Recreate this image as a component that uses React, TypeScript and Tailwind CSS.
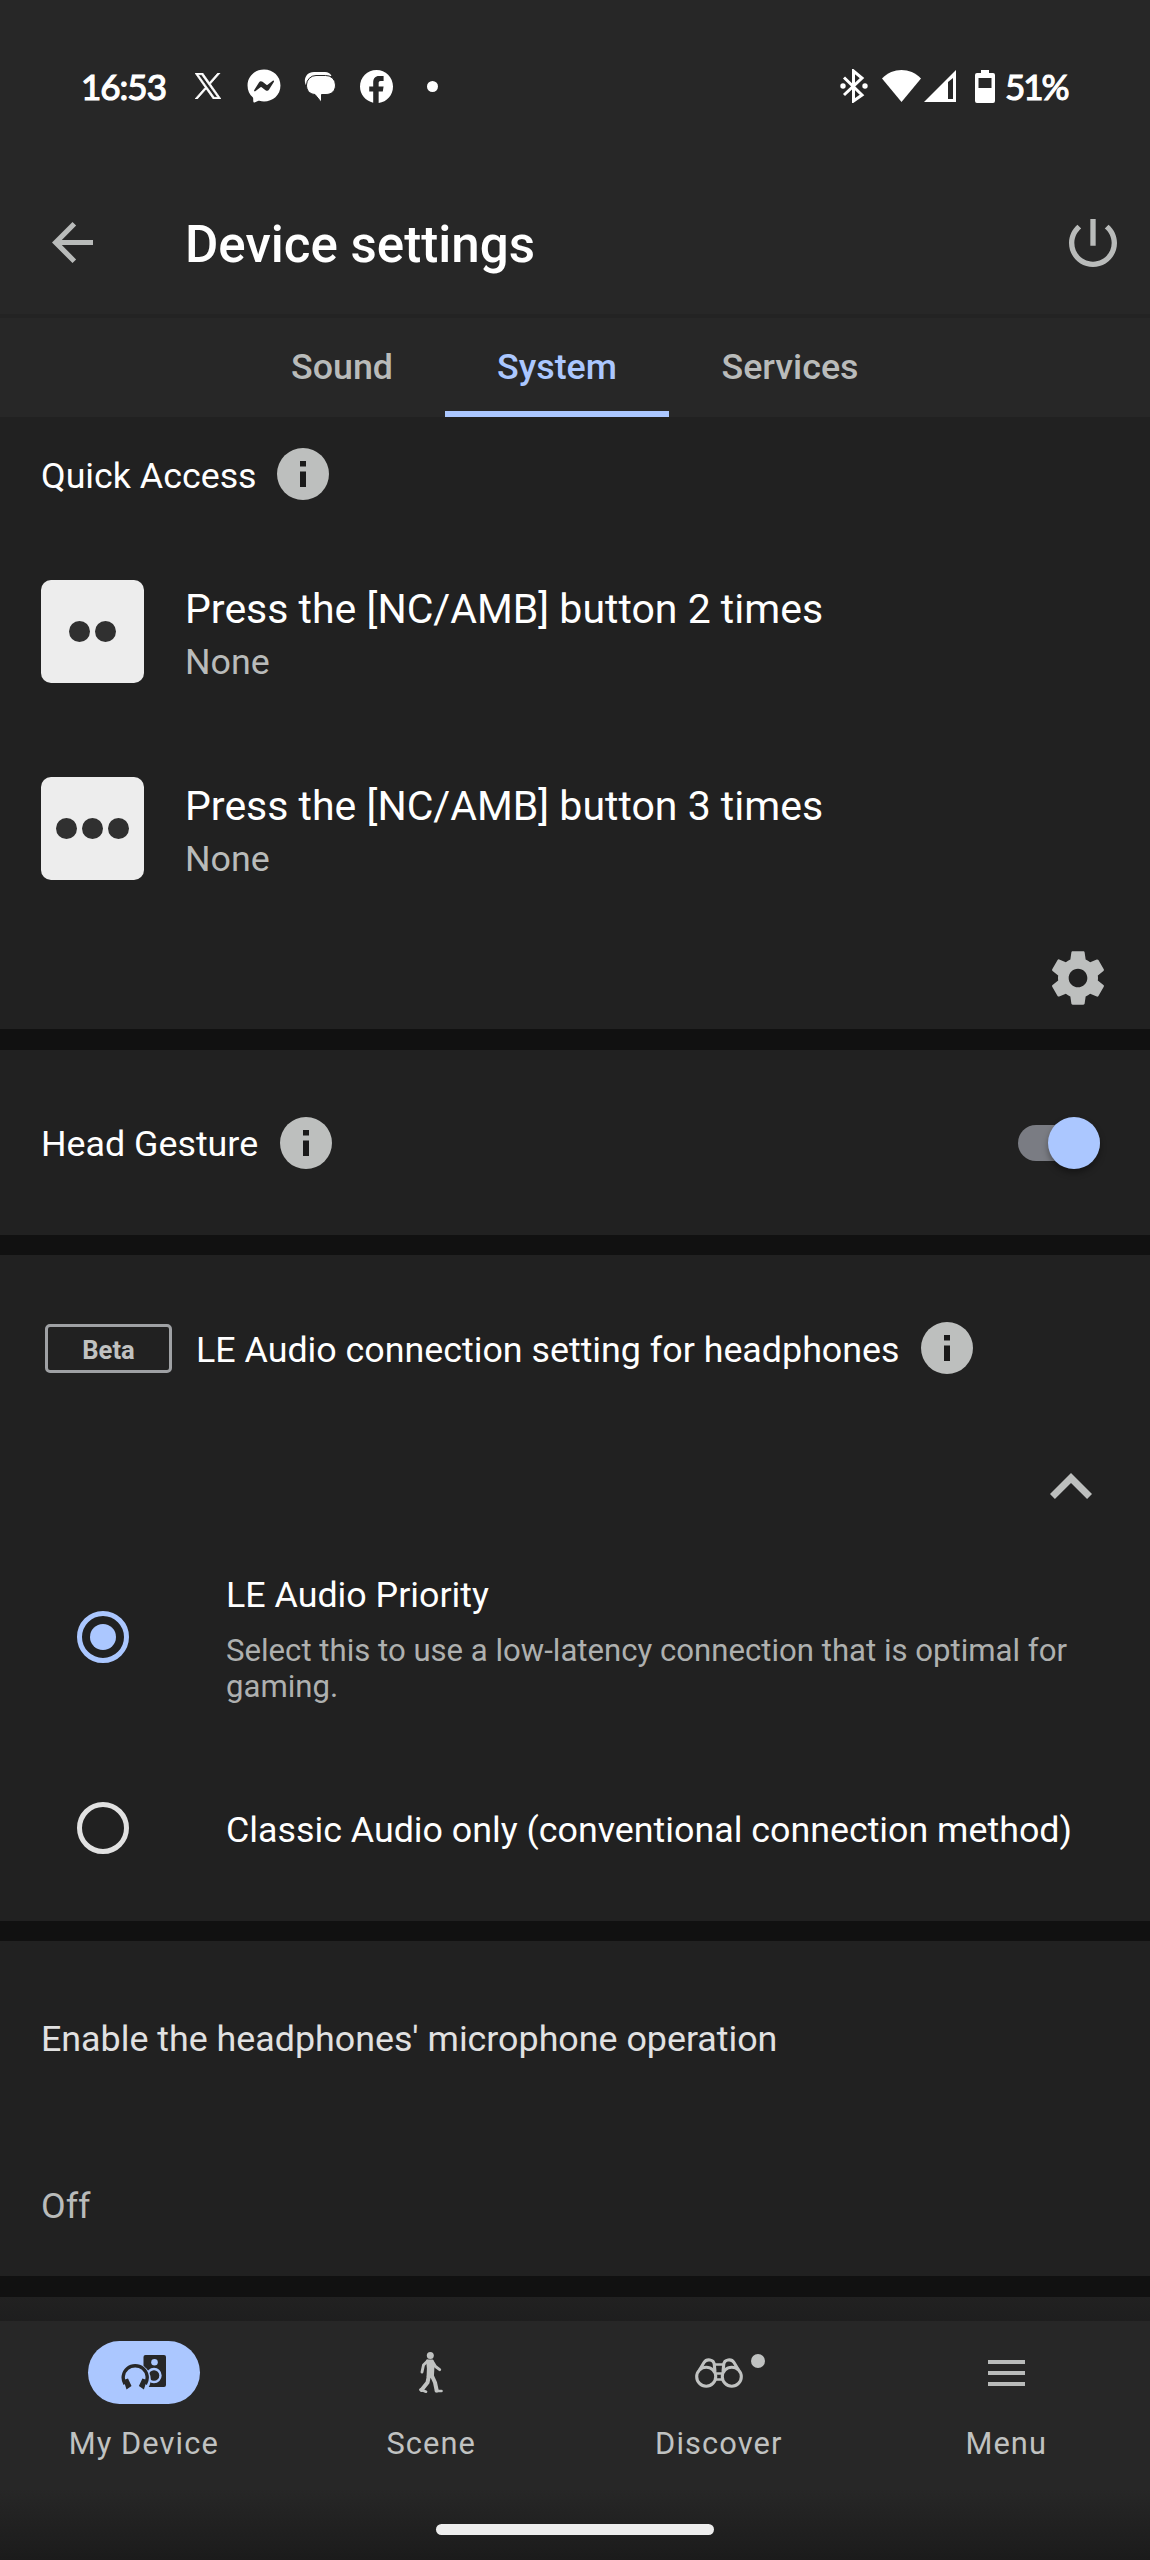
import type { ReactNode } from "react";
import { FaFacebookMessenger } from "react-icons/fa6";

function InfoIcon() {
  return (
    <svg className="h-[52px] w-[52px] shrink-0" viewBox="0 0 52 52">
      <circle cx="26" cy="26" r="26" fill="#bdbfbe" />
      <path d="M23 13h6v5.500h-6zM23 23.500h6V39h-6z" fill="#1a1a1a" />
    </svg>
  );
}

function StatusBar() {
  return (
    <div className="flex h-[172px] items-center pl-[81px] pr-[81px] text-white">
      <span className="w-[84px] whitespace-nowrap font-['Lato'] text-[35px] leading-[40px] tracking-[-1px] [-webkit-text-stroke:1.200px_white]">
        16:53
      </span>

      <svg className="ml-[30px] h-[26px] w-[26px]" viewBox="0 0 24 24" fill="currentColor" stroke="currentColor" strokeWidth="0.700">
        <path d="M14.258 10.152L23.176 0h-2.113l-7.747 8.813L7.133 0H0l9.352 13.328L0 23.973h2.113l8.176-9.309 6.531 9.309h7.133zm-2.895 3.293l-.949-1.328L2.875 1.560h3.246l6.086 8.523.945 1.328 7.910 11.078h-3.246zm0 0" />
      </svg>

      <FaFacebookMessenger className="ml-[26px] h-[34px] w-[34px]" />

      <svg className="ml-[23px] mt-[3px] h-[31px] w-[33px]" viewBox="0 0 33 31" fill="currentColor">
        <path d="M10 0h11c3 0 5 1 6.500 4H12C6 4 3 7 2.500 14C-1.500 8 2 0 10 0z" />
        <path d="M12 3.500h9.500a9.500 9.500 0 0 1 10 9.500c0 6-4 9.500-9.500 9.500h-4.500V30.500L11 22.500C5 22 2.500 18 2.500 13A9.500 9.500 0 0 1 12 3.500z" stroke="#272727" strokeWidth="1" />
      </svg>

      <svg className="ml-[23px] h-[33px] w-[33px]" viewBox="2 2 20 20" fill="currentColor">
        <path d="M22 12c0-5.520-4.480-10-10-10S2 6.480 2 12c0 4.840 3.440 8.870 8 9.800V15H7.600v-3H10V9.500C10 7.200 11.300 5.700 13.500 5.700h2.800v3h-1.800c-.9 0-1.200.45-1.200 1.200V12h3l-.5 3h-2.500v6.950c5.050-.5 8.700-4.760 8.700-9.950z" />
      </svg>

      <span className="ml-[34px] h-[11px] w-[11px] rounded-full bg-white" />

      <svg className="ml-auto h-[34px] w-[28px]" viewBox="0 0 28 34" fill="none" stroke="currentColor" strokeWidth="3">
        <path d="M4 8.500L22 26l-8.500 6V2L22 9 4 26" />
        <circle cx="3" cy="17" r="2.700" fill="currentColor" stroke="none" />
        <circle cx="25" cy="17" r="2.700" fill="currentColor" stroke="none" />
      </svg>

      <svg className="ml-[14px] h-[32px] w-[39px]" viewBox="0 0 39 32" fill="currentColor">
        <path d="M0 8.500C11 -2.800 28 -2.800 39 8.500L19.500 32z" />
      </svg>

      <svg className="ml-[3px] h-[32px] w-[32px]" viewBox="0 0 32 32" fill="currentColor">
        <path fillRule="evenodd" d="M0 32L32 0v32zM24 12v17h5V8z" />
      </svg>

      <svg className="ml-[19px] h-[33px] w-[20px]" viewBox="0 0 20 33" fill="currentColor">
        <path fillRule="evenodd" d="M6 0h8v3h4a2 2 0 0 1 2 2v26a2 2 0 0 1-2 2H2a2 2 0 0 1-2-2V5a2 2 0 0 1 2-2h4zM3.500 8v10h13V8z" />
      </svg>

      <span className="ml-[10px] w-[64px] whitespace-nowrap font-['Lato'] text-[35px] leading-[40px] tracking-[-2px] [-webkit-text-stroke:1.200px_white]">
        51%
      </span>
    </div>
  );
}

function Header() {
  return (
    <header className="flex h-[142px] items-center pb-[1px] pl-[52px] pr-[33px]">
      <svg className="h-[41px] w-[41px]" viewBox="4 4 16 16" fill="#b9bbba">
        <path d="M20 11H7.830l5.590-5.590L12 4l-8 8 8 8 1.410-1.410L7.830 13H20v-2z" />
      </svg>
      <h1 className="ml-[92px] mt-[4px] text-[51.100px] font-medium leading-[60px] text-white">
        Device settings
      </h1>
      <svg className="ml-auto h-[48px] w-[48px]" viewBox="3 3 18 18" fill="#b9bbba">
        <path d="M13 3h-2v10h2V3zm4.830 2.170l-1.420 1.420C17.990 7.860 19 9.810 19 12c0 3.870-3.130 7-7 7s-7-3.130-7-7c0-2.190 1.010-4.140 2.580-5.420L6.170 5.170C4.230 6.820 3 9.260 3 12c0 4.970 4.030 9 9 9s9-4.030 9-9c0-2.740-1.230-5.180-3.170-6.830z" />
      </svg>
    </header>
  );
}

function Tabs() {
  return (
    <nav className="flex h-[103px] justify-center border-t-4 border-[#232323] text-[35.800px] font-medium leading-[42px] text-[#b9bbba]">
      <div className="w-[206px] pt-[28px] text-center">Sound</div>
      <div className="w-[224px] border-b-[6px] border-[#abc7ff] pt-[28px] text-center text-[#abc7ff]">
        System
      </div>
      <div className="w-[242px] pt-[28px] text-center">Services</div>
    </nav>
  );
}

function QuickAccessRow({ presses }: { presses: number }) {
  return (
    <div className="flex h-[103px]">
      <div className="flex w-[103px] items-center justify-center gap-[5px] rounded-[10px] bg-[#ededed]">
        {Array.from({ length: presses }, (_, i) => (
          <span key={i} className="h-[21px] w-[21px] rounded-full bg-[#303030]" />
        ))}
      </div>
      <div className="ml-[41px] pt-[5px]">
        <p className="text-[41px] leading-[48px] text-white">
          Press the [NC/AMB] button {presses} times
        </p>
        <p className="mt-[8px] text-[35.800px] leading-[42px] text-[#b9bbba]">None</p>
      </div>
    </div>
  );
}

function Radio({ checked }: { checked?: boolean }) {
  if (checked) {
    return (
      <span className="flex h-[52px] w-[52px] shrink-0 items-center justify-center rounded-full border-[5px] border-[#abc7ff]">
        <span className="h-[26px] w-[26px] rounded-full bg-[#abc7ff]" />
      </span>
    );
  }
  return <span className="h-[52px] w-[52px] shrink-0 rounded-full border-[5px] border-[#e1e1e1]" />;
}

function NavItem({ label, children }: { label: string; children: ReactNode }) {
  return (
    <div className="flex flex-1 flex-col items-center pt-[20px]">
      {children}
      <span className="mt-[21px] text-[30.800px] leading-[38px] tracking-[1.100px] text-[#c0c2c1]">
        {label}
      </span>
    </div>
  );
}

function BottomNav() {
  return (
    <nav className="flex h-[167px] bg-[#272727]">
      <NavItem label="My Device">
        <div className="flex h-[63px] w-[112px] items-center justify-center rounded-full bg-[#abc7ff]">
          <svg className="h-[35px] w-[45px]" viewBox="0 0 45 35" fill="none">
            <rect x="22.500" width="22.500" height="32" rx="2" fill="#272727" />
            <circle cx="33.500" cy="7.300" r="3.300" fill="#abc7ff" />
            <circle cx="33" cy="20.500" r="6.500" fill="#272727" stroke="#abc7ff" strokeWidth="2.400" />
            <path d="M3 35A15.500 15.500 0 1 1 25.500 35z" fill="#abc7ff" />
            <path d="M4 29A12 12 0 1 1 24.400 29" stroke="#272727" strokeWidth="3.400" />
            <path d="M2.500 25l4.500-1.500 3.500 7.500-5 3.500zM25.900 25l-4.500-1.500-3.500 7.500 5 3.500z" fill="#272727" />
          </svg>
        </div>
      </NavItem>

      <NavItem label="Scene">
        <div className="flex h-[63px] items-center">
          <svg className="h-[41px] w-[24px]" viewBox="0 0 24 41" fill="none" stroke="#c0c2c1" strokeLinecap="round" strokeLinejoin="round">
            <circle cx="11.300" cy="3.500" r="3.500" fill="#c0c2c1" stroke="none" />
            <path d="M8 8.500h5.500l1 7-.5 9H8.500l.3-8z" fill="#c0c2c1" strokeWidth="1.800" />
            <path d="M8.500 9L4.500 13l-1.500 7M13.500 9.500l3 5 4.200 3.200" strokeWidth="2.900" />
            <path d="M10 23.500L8.500 30.500 2.500 38M12.800 23.500l3.200 7 1.700 8" strokeWidth="4" />
            <path d="M1.500 37.500l5.500 2.200M17 39h5.500" strokeWidth="2.600" />
          </svg>
        </div>
      </NavItem>

      <NavItem label="Discover">
        <div className="relative flex h-[63px] items-center">
          <svg className="h-[30px] w-[48px]" viewBox="0 0 48 30" fill="none" stroke="#c0c2c1" strokeWidth="3.100">
            <circle cx="11.200" cy="18.700" r="9.500" />
            <circle cx="36.800" cy="18.700" r="9.500" />
            <path d="M4.500 12L9 4.500c2.500-4 9.800-3.500 10.300 2L20 14M43.500 12L39 4.500c-2.500-4-9.800-3.500-10.300 2L28 14" />
            <path d="M19.500 6.500h9M20.500 15.500h7M20.500 21.500h7" strokeWidth="2.300" />
          </svg>
          <span className="absolute -right-[22px] top-[13px] h-[14px] w-[14px] rounded-full bg-[#c0c2c1]" />
        </div>
      </NavItem>

      <NavItem label="Menu">
        <div className="flex h-[63px] flex-col items-center justify-center gap-[7px]">
          <span className="h-[4px] w-[37px] bg-[#b9bbba]" />
          <span className="h-[4px] w-[37px] bg-[#b9bbba]" />
          <span className="h-[4px] w-[37px] bg-[#b9bbba]" />
        </div>
      </NavItem>
    </nav>
  );
}

export default function App() {
  return (
    <div className="flex h-[2560px] w-[1150px] flex-col overflow-hidden bg-[#272727] font-['Roboto',sans-serif] text-white">
      <StatusBar />
      <Header />
      <Tabs />

      <main className="flex h-[1904px] flex-col gap-[21px] overflow-hidden bg-[#111111]">
        <section className="h-[612px] shrink-0 bg-[#212121] px-[41px] pt-[31px]">
          <div className="flex items-center">
            <h2 className="w-[236px] pt-[4px] text-[35.800px] leading-[42px]">Quick Access</h2>
            <InfoIcon />
          </div>

          <div className="mt-[80px] flex flex-col gap-[94px]">
            <QuickAccessRow presses={2} />
            <QuickAccessRow presses={3} />
          </div>

          <div className="mt-[66px] flex justify-end">
            <svg className="-mr-[1px] h-[64px] w-[64px]" viewBox="0 0 24 24" fill="#bdbfbe">
              <path d="M19.430 12.980c.04-.32.07-.64.07-.98s-.03-.66-.07-.98l2.110-1.650c.19-.15.24-.42.12-.64l-2-3.460c-.12-.22-.39-.3-.61-.22l-2.490 1c-.52-.4-1.080-.73-1.690-.98l-.38-2.650C14.460 2.180 14.250 2 14 2h-4c-.25 0-.46.18-.49.42l-.38 2.650c-.61.25-1.170.59-1.690.98l-2.490-1c-.23-.09-.49 0-.61.22l-2 3.460c-.13.22-.07.49.12.64l2.110 1.650c-.04.32-.07.65-.07.98s.03.66.07.98l-2.110 1.650c-.19.15-.24.42-.12.64l2 3.460c.12.22.39.3.61.22l2.490-1c.52.4 1.080.73 1.690.98l.38 2.650c.03.24.24.42.49.42h4c.25 0 .46-.18.49-.42l.38-2.650c.61-.25 1.170-.59 1.690-.98l2.490 1c.23.09.49 0 .61-.22l2-3.460c.12-.22.07-.49-.12-.64l-2.110-1.650zM12 15.500c-1.930 0-3.500-1.570-3.500-3.500s1.570-3.500 3.500-3.500 3.500 1.570 3.500 3.500-1.570 3.500-3.500 3.500z" />
            </svg>
          </div>
        </section>

        <section className="flex h-[185px] shrink-0 items-center bg-[#212121] pl-[41px] pr-[50px]">
          <h2 className="w-[239px] pt-[3px] text-[35.800px] leading-[42px]">Head Gesture</h2>
          <InfoIcon />
          <div className="relative ml-auto h-[36px] w-[82px] rounded-full bg-[#7a7c83]">
            <span className="absolute -top-[8px] right-0 h-[52px] w-[52px] rounded-full bg-[#abc7ff] shadow-[0_4px_6px_rgba(0,0,0,0.35)]" />
          </div>
        </section>

        <section className="-mt-[1px] h-[666px] shrink-0 bg-[#212121] pl-[45px]">
          <div className="flex items-center pt-[67px]">
            <span className="h-[49px] w-[127px] rounded-[5px] border-[3px] border-[#9fa1a4] pt-[7px] text-center text-[25.600px] font-bold leading-[32px] text-[#c0c2c1]">
              Beta
            </span>
            <h2 className="ml-[24px] w-[725px] pt-[3px] text-[35.800px] leading-[42px]">
              LE Audio connection setting for headphones
            </h2>
            <InfoIcon />
          </div>

          <div className="mt-[99px] flex justify-end pr-[58px]">
            <svg className="h-[26px] w-[42px]" viewBox="6 8 12 7.410" fill="#bdbfbe">
              <path d="M12 8l-6 6 1.410 1.410L12 10.830l4.590 4.580L18 14z" />
            </svg>
          </div>

          <div className="mt-[75px] flex pl-[32px]">
            <div className="pt-[37px]">
              <Radio checked />
            </div>
            <div className="ml-[97px]">
              <p className="text-[35.800px] leading-[42px]">LE Audio Priority</p>
              <p className="mt-[17px] w-[870px] text-[31.150px] leading-[36px] text-[#aeb0af]">
                Select this to use a low-latency connection that is optimal for gaming.
              </p>
            </div>
          </div>

          <div className="mt-[97px] flex items-center pl-[32px]">
            <Radio />
            <p className="ml-[97px] pt-[4px] text-[35.800px] leading-[42px]">
              Classic Audio only (conventional connection method)
            </p>
          </div>
        </section>

        <section className="-mt-[1px] h-[335px] shrink-0 bg-[#212121] px-[41px] pt-[77px] text-[35.800px] leading-[42px]">
          <h2 className="text-[#e1e1e1]">Enable the headphones' microphone operation</h2>
          <p className="mt-[125px] text-[#b9bbba]">Off</p>
        </section>

        <section className="h-[24px] shrink-0 bg-linear-to-b from-[#212121] to-[#1e1e1e]" />
      </main>

      <BottomNav />

      <div className="flex flex-1 justify-center bg-linear-to-b from-[#272727] to-[#1b1b1b] pt-[36px]">
        <span className="h-[11px] w-[278px] rounded-full bg-[#ededed]" />
      </div>
    </div>
  );
}
